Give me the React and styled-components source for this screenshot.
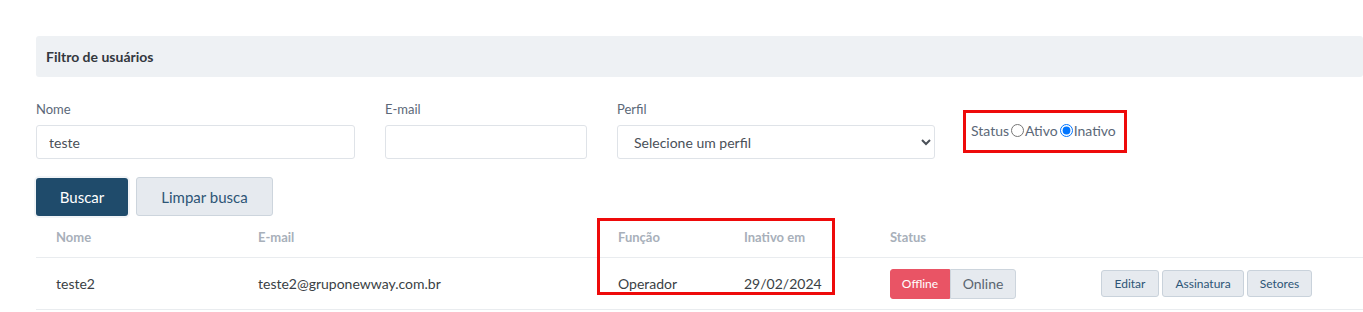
import React from 'react'
import styled, { createGlobalStyle } from 'styled-components'

const GlobalStyle = createGlobalStyle`
  body {
    margin: 0;
    background: #ffffff;
    font-family: Lato, "Open Sans", sans-serif;
    color: #3d4349;
  }
`

const users = [
  { nome: 'teste2', email: 'teste2@gruponewway.com.br', funcao: 'Operador', inativo: '29/02/2024' },
]

const App = () => {
  return (
    <>
      <GlobalStyle />
      <Page>
        <PanelHeader>Filtro de usuários</PanelHeader>
        <FilterRow>
          <Field $width={319}>
            <Label>Nome</Label>
            <Input defaultValue="teste" />
          </Field>
          <Field $width={202}>
            <Label>E-mail</Label>
            <Input />
          </Field>
          <Field $width={318}>
            <Label>Perfil</Label>
            <Select defaultValue="">
              <option value="">Selecione um perfil</option>
            </Select>
          </Field>
          <StatusGroup>
            Status
            <Radio type="radio" name="status" />Ativo
            <Radio type="radio" name="status" defaultChecked />Inativo
          </StatusGroup>
        </FilterRow>
        <Actions>
          <PrimaryButton>Buscar</PrimaryButton>
          <SecondaryButton>Limpar busca</SecondaryButton>
        </Actions>
        <TableWrap>
          <HeadRow>
            <HeadCell>Nome</HeadCell>
            <HeadCell>E-mail</HeadCell>
            <HeadCell>Função</HeadCell>
            <HeadCell>Inativo em</HeadCell>
            <HeadCell>Status</HeadCell>
            <HeadCell />
          </HeadRow>
          {users.map((u) => (
            <BodyRow key={u.email}>
              <Cell>{u.nome}</Cell>
              <Cell>{u.email}</Cell>
              <Cell>{u.funcao}</Cell>
              <Cell>{u.inativo}</Cell>
              <Cell>
                <Toggle>
                  <ToggleOption $active>Offline</ToggleOption>
                  <ToggleOption>Online</ToggleOption>
                </Toggle>
              </Cell>
              <Cell>
                <RowButtons>
                  <SmallButton $width={58}>Editar</SmallButton>
                  <SmallButton $width={82}>Assinatura</SmallButton>
                  <SmallButton $width={65}>Setores</SmallButton>
                </RowButtons>
              </Cell>
            </BodyRow>
          ))}
          <Highlight />
        </TableWrap>
      </Page>
    </>
  )
}

const Page = styled.div`
  padding: 36px 0 0 36px;
  width: 1327px;
`

const PanelHeader = styled.div`
  display: flex;
  align-items: center;
  height: 41px;
  padding-left: 10px;
  background-color: #eef1f4;
  border-radius: 3px;
  font-size: 14px;
  font-weight: 700;
  color: #33383e;
`

const FilterRow = styled.div`
  display: flex;
  align-items: flex-start;
  gap: 30px;
  margin-top: 22px;
`

const Field = styled.div`
  display: flex;
  flex-direction: column;
  width: ${({ $width }) => $width}px;
`

const Label = styled.label`
  font-size: 13px;
  line-height: 20px;
  color: #5b6878;
  margin-bottom: 6px;
`

const Input = styled.input`
  box-sizing: border-box;
  height: 34px;
  padding: 0 12px;
  border: 1px solid #dfe3e8;
  border-radius: 3px;
  font-family: Lato, sans-serif;
  font-size: 14px;
  color: #4a5058;
  outline: none;
`

const Select = styled.select`
  box-sizing: border-box;
  height: 34px;
  padding: 0 12px;
  border: 1px solid #dfe3e8;
  border-radius: 3px;
  background: #ffffff;
  font-family: Lato, sans-serif;
  font-size: 14px;
  color: #4a5058;
  outline: none;
`

const StatusGroup = styled.div`
  display: flex;
  align-items: center;
  box-sizing: border-box;
  width: 164px;
  height: 43px;
  margin: 11px 0 0 -2px;
  padding: 0 0 3px 5px;
  border: 3px solid #ee0a0a;
  font-size: 14px;
  color: #5b6878;
`

const Radio = styled.input`
  width: 13px;
  height: 13px;
  margin: 0 1px 0 2px;
`

const Actions = styled.div`
  display: flex;
  gap: 8px;
  margin-top: 19px;
`

const PrimaryButton = styled.button`
  width: 92px;
  height: 38px;
  border: none;
  border-radius: 3px;
  background-color: #1f4b6b;
  box-shadow: 0 0 0 2px #f1f4f7;
  font-family: Lato, sans-serif;
  font-size: 15px;
  color: #ffffff;
`

const SecondaryButton = styled.button`
  width: 137px;
  height: 39px;
  margin-top: -1px;
  border: 1px solid #cdd5dd;
  border-radius: 3px;
  background-color: #e6eaef;
  font-family: Lato, sans-serif;
  font-size: 15px;
  color: #2d5576;
`

const TableWrap = styled.div`
  position: relative;
`

const columns = '202px 360px 126px 146px 211px 1fr'

const HeadRow = styled.div`
  display: grid;
  grid-template-columns: ${columns};
  align-items: center;
  height: 41px;
  border-bottom: 1px solid #e9ecef;
`

const HeadCell = styled.div`
  padding-left: 20px;
  font-size: 13px;
  font-weight: 700;
  color: #a8b0ba;
`

const BodyRow = styled.div`
  display: grid;
  grid-template-columns: ${columns};
  align-items: center;
  height: 51px;
  border-bottom: 1px solid #e9ecef;
`

const Cell = styled.div`
  padding-left: 20px;
  font-size: 14px;
  color: #3a3f45;
`

const Toggle = styled.div`
  display: flex;
  height: 30px;
`

const ToggleOption = styled.div`
  display: flex;
  align-items: center;
  justify-content: center;
  box-sizing: border-box;
  width: ${({ $active }) => ($active ? 60 : 66)}px;
  border: 1px solid ${({ $active }) => ($active ? '#e95465' : '#cdd5dd')};
  border-radius: ${({ $active }) => ($active ? '3px 0 0 3px' : '0 3px 3px 0')};
  background-color: ${({ $active }) => ($active ? '#e95465' : '#e6eaef')};
  font-size: ${({ $active }) => ($active ? 12 : 14)}px;
  color: ${({ $active }) => ($active ? '#ffffff' : '#5a6570')};
`

const RowButtons = styled.div`
  display: flex;
  gap: 3px;
`

const SmallButton = styled.button`
  box-sizing: border-box;
  width: ${({ $width }) => $width}px;
  height: 27px;
  padding: 0;
  border: 1px solid #c9d2db;
  border-radius: 3px;
  background-color: #e6eaef;
  font-family: Lato, sans-serif;
  font-size: 12px;
  color: #2d5576;
`

const Highlight = styled.div`
  position: absolute;
  left: 561px;
  top: 2px;
  width: 238px;
  height: 77px;
  box-sizing: border-box;
  border: 3px solid #ee0a0a;
  pointer-events: none;
`

export default App
